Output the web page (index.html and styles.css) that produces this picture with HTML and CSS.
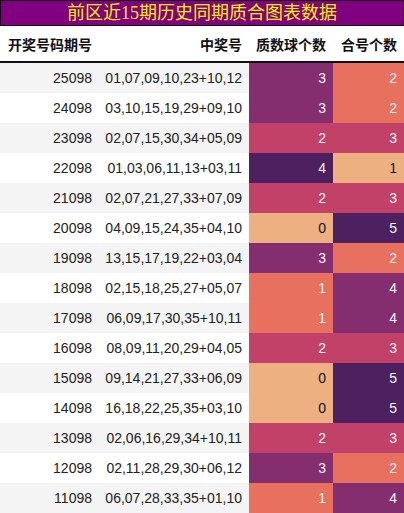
FILE: index.html
```html
<!DOCTYPE html>
<html>
<head>
<meta charset="UTF-8">
<title>前区近15期历史同期质合图表数据</title>
<link rel="stylesheet" href="styles.css">
</head>
<body>
	<div class="title">前区近15期历史同期质合图表数据</div>
	<table class="grid">
		<colgroup>
			<col class="w1"><col class="w2"><col class="w3"><col class="w4">
		</colgroup>
		<thead>
			<tr><th class="left">开奖号码期号</th><th>中奖号</th><th>质数球个数</th><th>合号个数</th></tr>
		</thead>
		<tbody>
			<tr><td>25098</td><td>01,07,09,10,23+10,12</td><td class="c3">3</td><td class="c1">2</td></tr>
			<tr><td>24098</td><td>03,10,15,19,29+09,10</td><td class="c3">3</td><td class="c1">2</td></tr>
			<tr><td>23098</td><td>02,07,15,30,34+05,09</td><td class="c2">2</td><td class="c2">3</td></tr>
			<tr><td>22098</td><td>01,03,06,11,13+03,11</td><td class="c4">4</td><td class="c0">1</td></tr>
			<tr><td>21098</td><td>02,07,21,27,33+07,09</td><td class="c2">2</td><td class="c2">3</td></tr>
			<tr><td>20098</td><td>04,09,15,24,35+04,10</td><td class="c0">0</td><td class="c4">5</td></tr>
			<tr><td>19098</td><td>13,15,17,19,22+03,04</td><td class="c3">3</td><td class="c1">2</td></tr>
			<tr><td>18098</td><td>02,15,18,25,27+05,07</td><td class="c1">1</td><td class="c3">4</td></tr>
			<tr><td>17098</td><td>06,09,17,30,35+10,11</td><td class="c1">1</td><td class="c3">4</td></tr>
			<tr><td>16098</td><td>08,09,11,20,29+04,05</td><td class="c2">2</td><td class="c2">3</td></tr>
			<tr><td>15098</td><td>09,14,21,27,33+06,09</td><td class="c0">0</td><td class="c4">5</td></tr>
			<tr><td>14098</td><td>16,18,22,25,35+03,10</td><td class="c0">0</td><td class="c4">5</td></tr>
			<tr><td>13098</td><td>02,06,16,29,34+10,11</td><td class="c2">2</td><td class="c2">3</td></tr>
			<tr><td>12098</td><td>02,11,28,29,30+06,12</td><td class="c3">3</td><td class="c1">2</td></tr>
			<tr><td>11098</td><td>06,07,28,33,35+01,10</td><td class="c1">1</td><td class="c3">4</td></tr>
		</tbody>
	</table>
</body>
</html>
```
FILE: styles.css
```css
body {
	margin: 0;
	background: white;
	font-family: 'Liberation Sans', 'Noto Sans CJK SC', sans-serif;
}
.title {
	height: 24px;
	line-height: 24px;
	background: #800080;
	border: 1px solid #111;
	color: #f5f000;
	text-align: center;
	font-size: 18px;
	font-family: 'Liberation Serif', 'Noto Sans CJK SC', serif;
}
.grid {
	width: 404px;
	table-layout: fixed;
	border-collapse: collapse;
	font-size: 14px;
	color: #222;
}
.w1 { width: 100px; }
.w2 { width: 149px; }
.w3 { width: 84px; }
.w4 { width: 71px; }
.grid th {
	height: 35px;
	padding: 0 7px 0 0;
	text-align: right;
	white-space: nowrap;
	font-weight: bold;
	font-size: 14px;
	color: #111;
	border-bottom: 2px solid #111;
	font-family: 'Noto Sans CJK SC', sans-serif;
}
.grid th.left {
	text-align: left;
	padding-left: 8px;
}
.grid td {
	height: 30px;
	padding: 0 7px 0 0;
	text-align: right;
	white-space: nowrap;
}
.grid td:first-child {
	padding-right: 8px;
}
.grid tbody tr:nth-child(odd) td {
	background: #f4f4f4;
}
.grid tbody tr td.c0 { background: #edb081; color: #111; }
.grid tbody tr td.c1 { background: #e8705f; color: #f4f4f4; }
.grid tbody tr td.c2 { background: #c14168; color: #f4f4f4; }
.grid tbody tr td.c3 { background: #852e6f; color: #f4f4f4; }
.grid tbody tr td.c4 { background: #4d2160; color: #f4f4f4; }
```
